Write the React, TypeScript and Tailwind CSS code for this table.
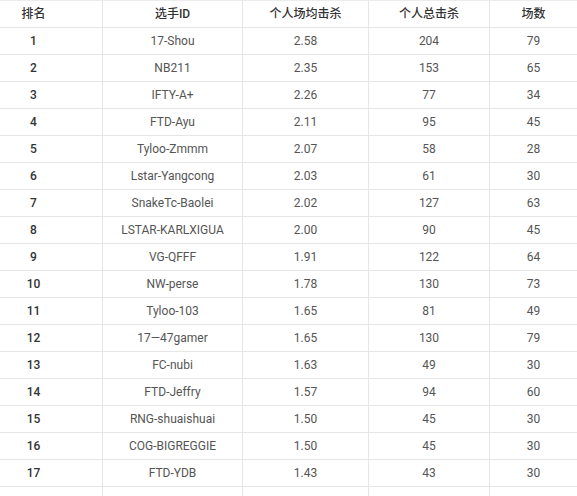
const rows: [number, string, string, number, number][] = [
  [1, '17-Shou', '2.58', 204, 79],
  [2, 'NB211', '2.35', 153, 65],
  [3, 'IFTY-A+', '2.26', 77, 34],
  [4, 'FTD-Ayu', '2.11', 95, 45],
  [5, 'Tyloo-Zmmm', '2.07', 58, 28],
  [6, 'Lstar-Yangcong', '2.03', 61, 30],
  [7, 'SnakeTc-Baolei', '2.02', 127, 63],
  [8, 'LSTAR-KARLXIGUA', '2.00', 90, 45],
  [9, 'VG-QFFF', '1.91', 122, 64],
  [10, 'NW-perse', '1.78', 130, 73],
  [11, 'Tyloo-103', '1.65', 81, 49],
  [12, '17—47gamer', '1.65', 130, 79],
  [13, 'FC-nubi', '1.63', 49, 30],
  [14, 'FTD-Jeffry', '1.57', 94, 60],
  [15, 'RNG-shuaishuai', '1.50', 45, 30],
  [16, 'COG-BIGREGGIE', '1.50', 45, 30],
  [17, 'FTD-YDB', '1.43', 43, 30],
];

const grid = 'grid grid-cols-[103px_140px_126px_121px_87px] border-b border-[#e6e6e6]';
const cell = 'flex items-center justify-center border-r border-[#e6e6e6]';

export default function App() {
  return (
    <div className="w-[577px] h-[496px] overflow-hidden bg-white text-[12px] font-['Roboto','Noto_Sans_CJK_SC',sans-serif]">
      <div className="border-t border-[#ececec]">
        <div className={`${grid} h-[27px] font-medium text-[#333]`}>
          <div className={`${cell} pr-[35px]`}>排名</div>
          <div className={cell}>选手ID</div>
          <div className={cell}>个人场均击杀</div>
          <div className={cell}>个人总击杀</div>
          <div className="flex items-center justify-center">场数</div>
        </div>
        {rows.map(r => (
          <div key={r[0]} className={`${grid} h-[27px] text-[#555]`}>
            <div className={`${cell} pr-[35px] font-medium text-[#333]`}>{r[0]}</div>
            <div className={cell}>{r[1]}</div>
            <div className={cell}>{r[2]}</div>
            <div className={cell}>{r[3]}</div>
            <div className="flex items-center justify-center">{r[4]}</div>
          </div>
        ))}
        <div className={`${grid} h-[27px]`}>
          <div className={cell}></div>
          <div className={cell}></div>
          <div className={cell}></div>
          <div className={cell}></div>
          <div></div>
        </div>
      </div>
    </div>
  );
}
